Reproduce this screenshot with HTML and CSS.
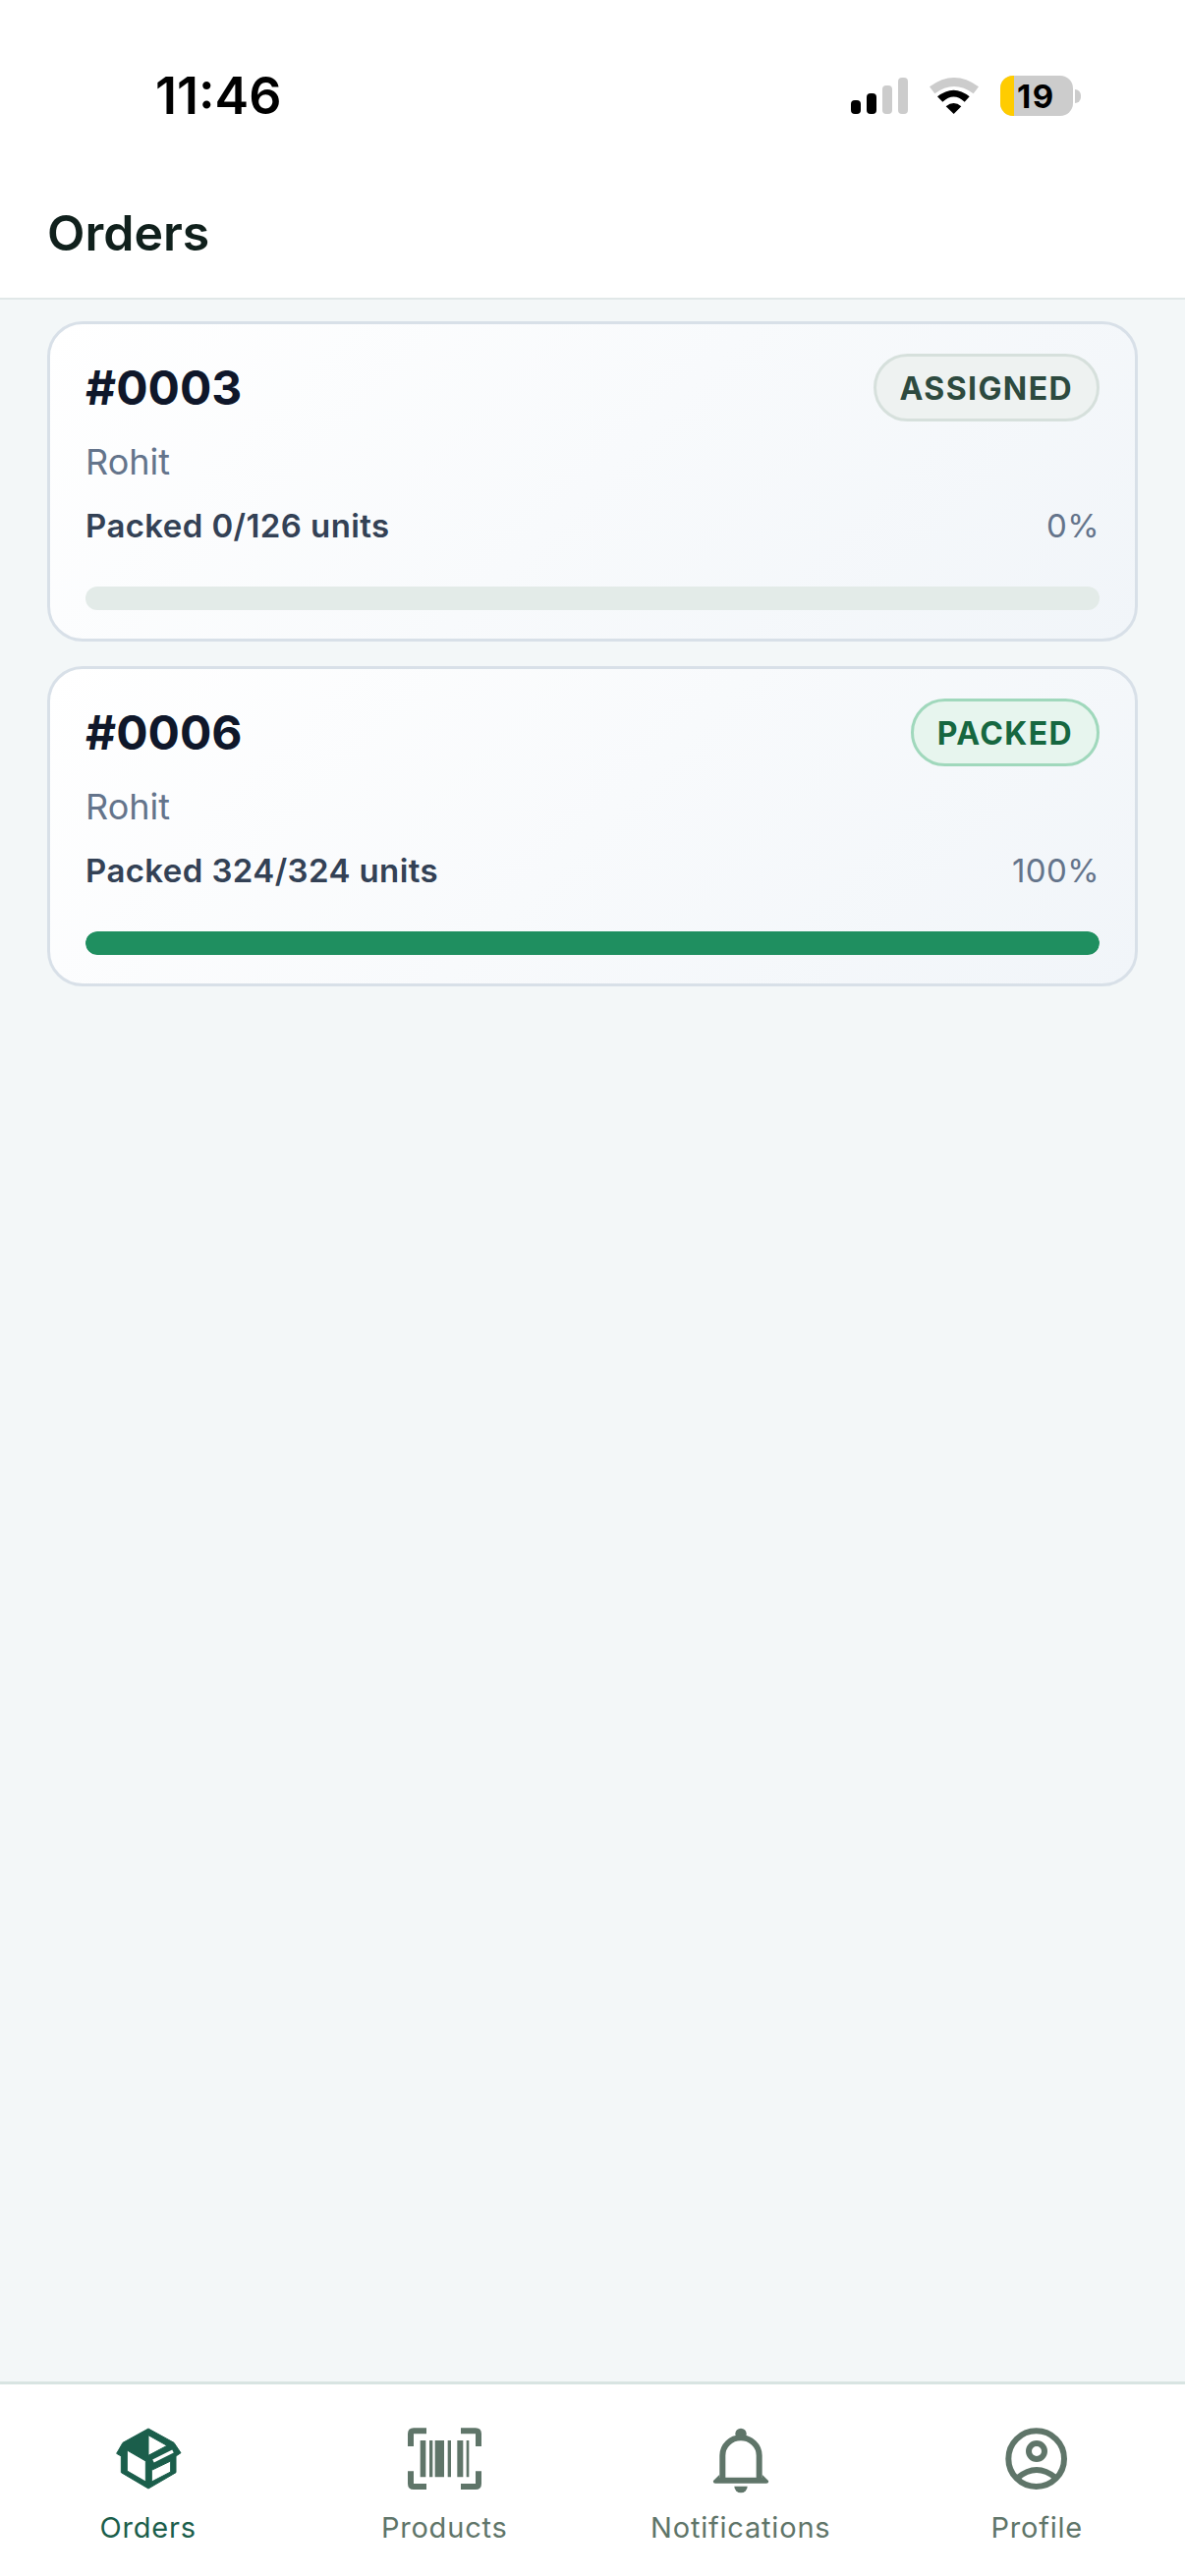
FILE: index.html
```html
<!DOCTYPE html>
<html lang="en">

<head>
    <meta charset="UTF-8">
    <meta name="viewport" content="width=device-width, initial-scale=1.0">
    <title>Orders</title>
    <link rel="stylesheet" href="styles.css">
</head>

<body>
    <div class="app">
        <header class="top">
            <!-- Status bar -->
            <div class="status">
                <span class="time">11:46</span>
                <div class="status-icons">
                    <div class="signal">
                        <i class="bar bar-1"></i>
                        <i class="bar bar-2"></i>
                        <i class="bar bar-3"></i>
                        <i class="bar bar-4"></i>
                    </div>
                    <svg class="wifi" viewBox="318 57 150 111" width="50" height="37">
                        <path fill="#cccccc" d="M318 85 Q393 29 468 85 L452 106 Q393 62 334 106 Z" />
                        <path fill="#000000" d="M342 115 Q392 75 440 115 L425 131 Q392 100 358 131 Z" />
                        <path fill="#000000" d="M368 145 Q392 125 415 145 L392 168 Z" />
                    </svg>
                    <div class="battery">
                        <div class="battery-body">
                            <span class="battery-level"></span>
                            <span class="battery-text">19</span>
                        </div>
                        <span class="battery-tip"></span>
                    </div>
                </div>
            </div>
            <h1 class="page-title">Orders</h1>
        </header>

        <main class="orders">
            <article class="card">
                <div class="card-head">
                    <h2 class="order-no">#0003</h2>
                    <span class="badge badge-assigned">ASSIGNED</span>
                </div>
                <p class="customer">Rohit</p>
                <div class="progress-row">
                    <span class="progress-label">Packed 0/126 units</span>
                    <span class="progress-pct">0%</span>
                </div>
                <div class="track">
                    <div class="fill" style="width: 0%"></div>
                </div>
            </article>

            <article class="card">
                <div class="card-head">
                    <h2 class="order-no">#0006</h2>
                    <span class="badge badge-packed">PACKED</span>
                </div>
                <p class="customer">Rohit</p>
                <div class="progress-row">
                    <span class="progress-label">Packed 324/324 units</span>
                    <span class="progress-pct">100%</span>
                </div>
                <div class="track">
                    <div class="fill" style="width: 100%"></div>
                </div>
            </article>
        </main>

        <!-- Bottom tabs -->
        <nav class="tabs">
            <a class="tab tab-active">
                <svg class="tab-icon" viewBox="0 0 216 216">
                    <path fill="currentColor" fill-rule="evenodd" stroke="currentColor" stroke-width="3" stroke-linejoin="round"
                        d="M108 18 L186 61 L207 92 L192 102 L192 152 L108 201 L25 152 L25 102 L11 94 L30 61 Z
                           M108 38 L108 100 L165 70 Z
                           M43 84 L100 117 L100 180 L43 147 Z
                           M118 145 L176 117 L176 150 L118 180 Z" />
                    <path fill="none" stroke="#ffffff" stroke-width="10" d="M123 117 L183 87" />
                </svg>
                <span class="tab-label">Orders</span>
            </a>
            <a class="tab">
                <svg class="tab-icon icon-wide" viewBox="0 0 234 216">
                    <path fill="none" stroke="currentColor" stroke-width="18"
                        d="M63 25 H24 Q15 25 15 34 V72 M168 25 H213 Q222 25 222 34 V72 M63 195 H24 Q15 195 15 186 V148 M168 195 H213 Q222 195 222 186 V148" />
                    <path fill="currentColor"
                        d="M44 54 H61 V166 H44 Z M72 54 H82 V166 H72 Z M89 54 H117 V166 H89 Z M128 54 H138 V166 H128 Z M157 54 H175 V166 H157 Z M185 54 H193 V166 H185 Z" />
                </svg>
                <span class="tab-label">Products</span>
            </a>
            <a class="tab">
                <svg class="tab-icon" viewBox="0 0 216 216">
                    <circle cx="108" cy="34" r="17" fill="currentColor" />
                    <path fill="none" stroke="currentColor" stroke-width="18" d="M52 176 V100 A56 54 0 0 1 164 100 V176" />
                    <path fill="currentColor"
                        d="M43 158 L24 177 Q22 185 30 185 H186 Q194 185 192 177 L173 158 V167 H43 Z" />
                    <path fill="currentColor" d="M88 194 H128 A20 20 0 0 1 88 194 Z" />
                </svg>
                <span class="tab-label">Notifications</span>
            </a>
            <a class="tab">
                <svg class="tab-icon" viewBox="0 0 216 216">
                    <g fill="none" stroke="currentColor" stroke-width="18">
                        <circle cx="107" cy="110" r="85" />
                        <circle cx="108" cy="87" r="24" />
                        <path d="M50 168 Q108 120 166 168" />
                    </g>
                </svg>
                <span class="tab-label">Profile</span>
            </a>
        </nav>
    </div>
</body>

</html>
```

FILE: styles.css
```css
* {
    box-sizing: border-box;
}

body {
    margin: 0;
    font-family: Inter, "Noto Sans", sans-serif;
    background-color: #f3f7f8;
}

.app {
    display: flex;
    flex-direction: column;
    height: 100vh;
}

/* Header + status bar */
.top {
    height: 305px;
    padding-top: 77px;
    background-color: #fff;
    border-bottom: 2px solid #e1e8e8;
}

.status {
    display: flex;
    align-items: flex-start;
    justify-content: space-between;
    padding: 0 106px 0 158px;
}

.time {
    font-size: 52px;
    font-weight: 600;
    line-height: 42px;
    color: #000;
}

.status-icons {
    display: flex;
    align-items: flex-start;
    gap: 22px;
}

.signal {
    display: flex;
    align-items: flex-end;
    gap: 6px;
    height: 37px;
    margin-top: 2px;
}

.bar {
    display: block;
    width: 10px;
    border-radius: 4px;
    background-color: #ccc;
}

.bar-1 {
    height: 14px;
    background-color: #000;
}

.bar-2 {
    height: 21px;
    background-color: #000;
}

.bar-3 {
    height: 29px;
}

.bar-4 {
    height: 37px;
}

.wifi {
    margin-top: 2px;
}

.battery {
    display: flex;
    align-items: center;
    gap: 2px;
}

.battery-body {
    display: flex;
    align-items: center;
    width: 74px;
    height: 41px;
    overflow: hidden;
    border-radius: 13px;
    background-color: #ccc;
}

.battery-level {
    width: 14px;
    height: 100%;
    background-color: #ffcc00;
}

.battery-text {
    margin-left: 3px;
    font-size: 33px;
    font-weight: 700;
    letter-spacing: 1.5px;
    color: #000;
}

.battery-tip {
    width: 6px;
    height: 14px;
    border-radius: 0 7px 7px 0;
    background-color: #ccc;
}

.page-title {
    margin: 90px 0 0 48px;
    font-size: 50px;
    font-weight: 600;
    line-height: 56px;
    color: #10201c;
}

/* Order list */
.orders {
    flex: 1;
    display: flex;
    flex-direction: column;
    gap: 25px;
    padding: 22px 48px 0;
}

.card {
    height: 326px;
    padding: 30px 36px 0;
    border: 3px solid #d8e0e8;
    border-radius: 36px;
    background: linear-gradient(135deg, #fff 0%, #f1f5f9 100%);
}

.card-head {
    display: flex;
    align-items: center;
    justify-content: space-between;
    height: 69px;
}

.order-no {
    margin: 0;
    font-size: 48px;
    font-weight: 700;
    color: #0f172a;
}

.badge {
    height: 69px;
    padding: 0 24px;
    border: 3px solid;
    border-radius: 35px;
    font-size: 32px;
    font-weight: 700;
    line-height: 65px;
    letter-spacing: 1.4px;
}

.badge-assigned {
    border-color: #d6e0dc;
    background-color: #eef2f1;
    color: #2d4a3f;
}

.badge-packed {
    border-color: #a0d8bc;
    background-color: #e7f5ee;
    color: #166740;
}

.customer {
    margin: 21px 0 0;
    font-size: 36px;
    line-height: 40px;
    color: #64748b;
}

.progress-row {
    display: flex;
    align-items: center;
    justify-content: space-between;
    margin-top: 25px;
}

.progress-label {
    font-size: 33px;
    font-weight: 600;
    line-height: 40px;
    letter-spacing: 0.4px;
    color: #334155;
}

.progress-pct {
    font-size: 33px;
    line-height: 40px;
    letter-spacing: 0.4px;
    color: #64748b;
}

.track {
    height: 24px;
    margin-top: 42px;
    overflow: hidden;
    border-radius: 12px;
    background-color: #e3ebe8;
}

.fill {
    height: 100%;
    border-radius: 12px;
    background-color: #1f8f60;
}

/* Tabs */
.tabs {
    display: grid;
    grid-template-columns: repeat(4, 1fr);
    height: 198px;
    border-top: 3px solid #d8e4e2;
    background-color: #fff;
}

.tab {
    display: flex;
    flex-direction: column;
    align-items: center;
    padding-top: 39px;
    color: #5f7569;
}

.tab-active {
    color: #1b5e4b;
}

.tab-icon {
    display: block;
    width: 72px;
    height: 72px;
}

.icon-wide {
    width: 78px;
}

.tab-label {
    margin-top: 17px;
    font-size: 29px;
    line-height: 36px;
    letter-spacing: 0.8px;
}
```
